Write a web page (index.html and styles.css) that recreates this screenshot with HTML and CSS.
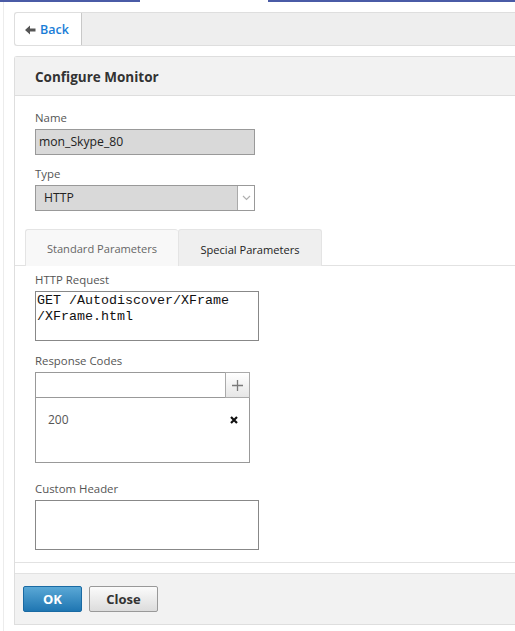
FILE: index.html
```html
<!DOCTYPE html>
<html>
<head>
<meta charset="utf-8">
<link rel="stylesheet" href="styles.css">
</head>
<body>
<div class="topbar"><span class="tb-blue tb-a"></span><span class="tb-white"></span><span class="tb-blue tb-b"></span></div>
<div class="page">
  <div class="toolbar">
    <a class="back-btn"><svg class="back-arrow" width="11" height="10" viewBox="0 0 11 10"><path d="M0 5 L5 0.5 L5 3.5 L10.5 3.5 L10.5 6.5 L5 6.5 L5 9.5 Z" fill="#555"/></svg><span>Back</span></a>
  </div>
  <div class="panel">
    <div class="panel-header">Configure Monitor</div>
    <div class="panel-body">
      <div class="fields top-fields">
        <label class="lbl">Name</label>
        <div class="input disabled name-input">mon_Skype_80</div>
        <label class="lbl lbl-gap">Type</label>
        <div class="select disabled">
          <span class="select-val">HTTP</span>
          <span class="select-arrow"><svg width="9" height="6" viewBox="0 0 9 6"><path d="M1 1 L4.5 4.5 L8 1" fill="none" stroke="#b0b0b0" stroke-width="1.2"/></svg></span>
        </div>
      </div>
      <div class="tabs">
        <div class="tab tab-std">Standard Parameters</div>
        <div class="tab tab-spec">Special Parameters</div>
      </div>
      <div class="fields bottom-fields">
        <label class="lbl">HTTP Request</label>
        <div class="textarea mono">GET /Autodiscover/XFrame<br>/XFrame.html</div>
        <label class="lbl lbl-gap2">Response Codes</label>
        <div class="codes">
          <div class="codes-row">
            <div class="codes-input"></div>
            <div class="plus-btn"><svg width="11" height="11" viewBox="0 0 11 11"><path d="M5.5 0 V11 M0 5.5 H11" stroke="#7a7a7a" stroke-width="1.3"/></svg></div>
          </div>
          <div class="codes-list">
            <div class="code-item"><span>200</span><svg class="x-icon" width="8" height="8" viewBox="0 0 8 8"><path d="M1 1 L7 7 M7 1 L1 7" stroke="#111" stroke-width="2.2"/></svg></div>
          </div>
        </div>
        <label class="lbl lbl-gap3">Custom Header</label>
        <div class="textarea"></div>
      </div>
    </div>
    <div class="panel-spacer"></div>
    <div class="panel-footer">
      <button class="btn btn-ok">OK</button>
      <button class="btn btn-close">Close</button>
    </div>
  </div>
</div>
</body>
</html>
```
FILE: styles.css
```css
html, body {
  margin: 0;
  padding: 0;
  background: #fff;
}
body {
  font-family: "Open Sans", "Liberation Sans", sans-serif;
  color: #333;
}
.topbar {
  display: flex;
  height: 2px;
}
.tb-blue { background: #4a5ba6; }
.tb-a { width: 140px; }
.tb-white { width: 128px; background: #fff; }
.tb-b { flex: 1; }

.page {
  margin-left: 3px;
  border-left: 1px solid #ececec;
  padding-left: 10px;
  padding-top: 10px;
  padding-bottom: 6px;
}
.toolbar {
  display: flex;
  height: 32px;
  border: 1px solid #dedede;
  border-right: none;
  border-radius: 3px 0 0 3px;
  background: #eeeeee;
}
.back-btn {
  display: flex;
  align-items: center;
  width: 67px;
  background: #fff;
  border-right: 1px solid #c8c8c8;
  border-radius: 3px 0 0 3px;
  padding-left: 10px;
  box-sizing: border-box;
  gap: 4px;
  color: #1a7dd7;
  font-weight: 600;
  font-size: 12.5px;
}
.back-arrow { margin-top: 1px; }

.panel {
  margin-top: 10px;
  border: 1px solid #dedede;
  border-right: none;
  border-radius: 3px 0 0 0;
}
.panel-header {
  height: 38px;
  line-height: 40px;
  background: #f2f2f2;
  border-bottom: 1px solid #dedede;
  padding-left: 20px;
  font-weight: 700;
  font-size: 13.5px;
  color: #333;
}
.panel-body {
  border-bottom: 1px solid #e2e2e2;
  padding-bottom: 12px;
}
.fields {
  display: flex;
  flex-direction: column;
  align-items: flex-start;
  padding-left: 20px;
}
.top-fields { padding-top: 14px; padding-bottom: 18px; }
.bottom-fields { padding-top: 6px; }
.lbl {
  display: block;
  font-size: 11.4px;
  line-height: 16px;
  color: #555;
  margin-bottom: 3px;
}
.lbl-gap { margin-top: 11px; }
.lbl-gap2 { margin-top: 12px; }
.lbl-gap3 { margin-top: 18px; }
.input, .select {
  box-sizing: border-box;
  width: 220px;
  height: 26px;
  border: 1px solid #999;
  font-size: 12.2px;
  color: #222;
  line-height: 24px;
}
.disabled { background: #d9d9d9; }
.name-input { padding-left: 3px; }
.select {
  display: flex;
  justify-content: space-between;
}
.select-val { padding-left: 8px; }
.select-arrow {
  width: 16px;
  background: #fff;
  border-left: 1px solid #aaa;
  display: flex;
  align-items: center;
  justify-content: center;
}
.tabs {
  display: flex;
  padding-left: 10px;
  border-bottom: 1px solid #e2e2e2;
  height: 36px;
}
.tab {
  box-sizing: border-box;
  height: 37px;
  border: 1px solid #e4e4e4;
  border-bottom: none;
  border-radius: 3px 3px 0 0;
  font-size: 11.1px;
  display: flex;
  align-items: center;
  justify-content: center;
}
.tab-std {
  width: 153px;
  background: #f8f8f8;
  color: #666;
  border-right: none;
}
.tab-spec {
  width: 144px;
  background: #efefef;
  color: #222;
  padding-top: 2px;
}
.textarea {
  box-sizing: border-box;
  width: 224px;
  height: 50px;
  border: 1px solid #888;
  background: #fff;
}
.mono {
  font-family: "Liberation Mono", monospace;
  font-size: 13.33px;
  line-height: 16px;
  padding: 1px 0 0 1px;
  color: #111;
}
.codes { width: 215px; }
.codes-row { display: flex; height: 26px; }
.codes-input {
  flex: 1;
  box-sizing: border-box;
  border: 1px solid #999;
  background: #fff;
}
.plus-btn {
  box-sizing: border-box;
  width: 25px;
  margin-left: -1px;
  border: 1px solid #aaa;
  background: linear-gradient(#ffffff, #e6e6e6);
  display: flex;
  align-items: center;
  justify-content: center;
}
.codes-list {
  box-sizing: border-box;
  height: 65px;
  border: 1px solid #999;
  border-top: none;
  background: #fff;
}
.code-item {
  display: flex;
  justify-content: space-between;
  align-items: center;
  padding: 13px 11px 0 12px;
  font-size: 12px;
  color: #555;
}
.panel-spacer { height: 10px; border-bottom: 1px solid #e2e2e2; }
.panel-footer {
  background: #f2f2f2;
  height: 50px;
  display: flex;
  align-items: flex-start;
  gap: 7px;
  padding: 12px 0 0 8px;
  box-sizing: border-box;
}
.btn {
  height: 26px;
  font-family: "Open Sans", "Liberation Sans", sans-serif;
  font-weight: 700;
  font-size: 13px;
  border-radius: 2px;
  padding: 0;
  cursor: pointer;
}
.btn-ok {
  width: 59px;
  color: #fff;
  border: 1px solid #1a6aa3;
  background: linear-gradient(#5aa8d6, #1f76b2);
}
.btn-close {
  width: 69px;
  color: #333;
  border: 1px solid #999;
  background: linear-gradient(#fbfbfb, #dcdcdc);
}
```
